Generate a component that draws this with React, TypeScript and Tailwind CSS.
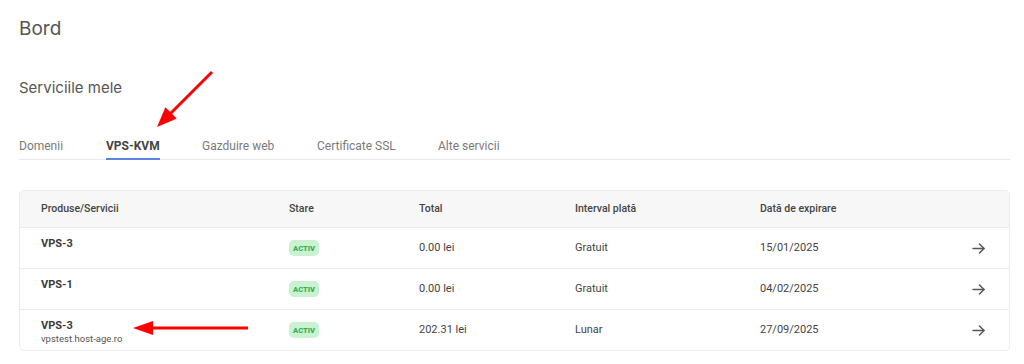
import React from "react";

const rows = [
  { name: "VPS-3", sub: "", total: "0.00 lei", interval: "Gratuit", date: "15/01/2025" },
  { name: "VPS-1", sub: "", total: "0.00 lei", interval: "Gratuit", date: "04/02/2025" },
  { name: "VPS-3", sub: "vpstest.host-age.ro", total: "202.31 lei", interval: "Lunar", date: "27/09/2025" },
];

const tabs = [
  { t: "Domenii", w: "w-[87px]" },
  { t: "VPS-KVM", w: "w-[96px]" },
  { t: "Gazduire web", w: "w-[115px]" },
  { t: "Certificate SSL", w: "w-[121px]" },
  { t: "Alte servicii", w: "w-[100px]" },
];

function Arrow() {
  return (
    <svg width="13" height="11" viewBox="0 0 13 11" fill="none" stroke="#555" strokeWidth="1.5" strokeLinecap="round" strokeLinejoin="round">
      <path d="M1 5.5H12" />
      <path d="M7.5 1L12 5.5L7.5 10" />
    </svg>
  );
}

export default function App() {
  return (
    <div className="relative w-[1024px] h-[364px] bg-white overflow-hidden" style={{ fontFamily: "Inter, 'Noto Sans', sans-serif" }}>
      <div className="pl-[19px] pr-[14px] pt-[15px]">
        <h1 className="text-[19px] leading-[28px] text-[#555] font-normal">Bord</h1>
        <h2 className="mt-[34px] text-[15px] leading-[22px] text-[#555] font-normal">Serviciile mele</h2>
        <div className="mt-[37px] flex border-b border-[#e9e9e9]" style={{ fontFamily: "Roboto, 'Noto Sans', sans-serif" }}>
          {tabs.map((tb, i) => (
            <div key={tb.t} className={`${tb.w} flex`}>
              <div
                className={`-mb-px pb-[2px] border-b-2 text-[12px] leading-[20px] ${
                  i === 1 ? "border-[#5b84e0] font-bold text-[#444]" : "border-transparent text-[#7a7a7a]"
                }`}
              >
                {tb.t}
              </div>
            </div>
          ))}
        </div>
        <div
          className="mt-[30px] w-[991px] border border-[#ececec] rounded-[5px] overflow-hidden"
          style={{ fontFamily: "Roboto, 'Noto Sans', sans-serif" }}
        >
          <div className="h-[37px] bg-[#f7f7f7] border-b border-[#ececec] grid grid-cols-[248px_130px_156px_185px_1fr] items-center pl-[21px] text-[10.5px] font-medium text-[#444]">
            <div>Produse/Servicii</div>
            <div>Stare</div>
            <div>Total</div>
            <div>Interval plată</div>
            <div>Dată de expirare</div>
          </div>
          {rows.map((r, i) => (
            <div
              key={i}
              className={`${i < 2 ? "h-[41px] border-b border-[#ececec]" : "h-[40px]"} grid grid-cols-[248px_130px_156px_185px_1fr] items-center pl-[21px] pr-[24px] text-[11px] text-[#444]`}
            >
              <div className="self-start pt-[8px]">
                <div className="text-[11px] leading-[16px] font-bold text-[#3a3a3a]">{r.name}</div>
                {r.sub && <div className="text-[9.5px] leading-[10px] text-[#555]">{r.sub}</div>}
              </div>
              <div>
                <span className="inline-flex items-center justify-center w-[30px] h-[16px] rounded-[5px] bg-[#c9f1d2] text-[#2fb352] text-[7.5px] font-black">
                  ACTIV
                </span>
              </div>
              <div>{r.total}</div>
              <div>{r.interval}</div>
              <div className="flex items-center justify-between">
                <span>{r.date}</span>
                <Arrow />
              </div>
            </div>
          ))}
        </div>
      </div>
      <svg className="absolute inset-0 pointer-events-none" width="1024" height="364">
        <line x1="212" y1="72" x2="170" y2="114" stroke="#ff0000" strokeWidth="3" />
        <polygon points="157,127 176.8,118.6 165.4,107.2" fill="#ff0000" />
        <line x1="248" y1="328" x2="150" y2="328" stroke="#ff0000" strokeWidth="3" />
        <polygon points="133,328 153,321 153,335" fill="#ff0000" />
      </svg>
    </div>
  );
}
